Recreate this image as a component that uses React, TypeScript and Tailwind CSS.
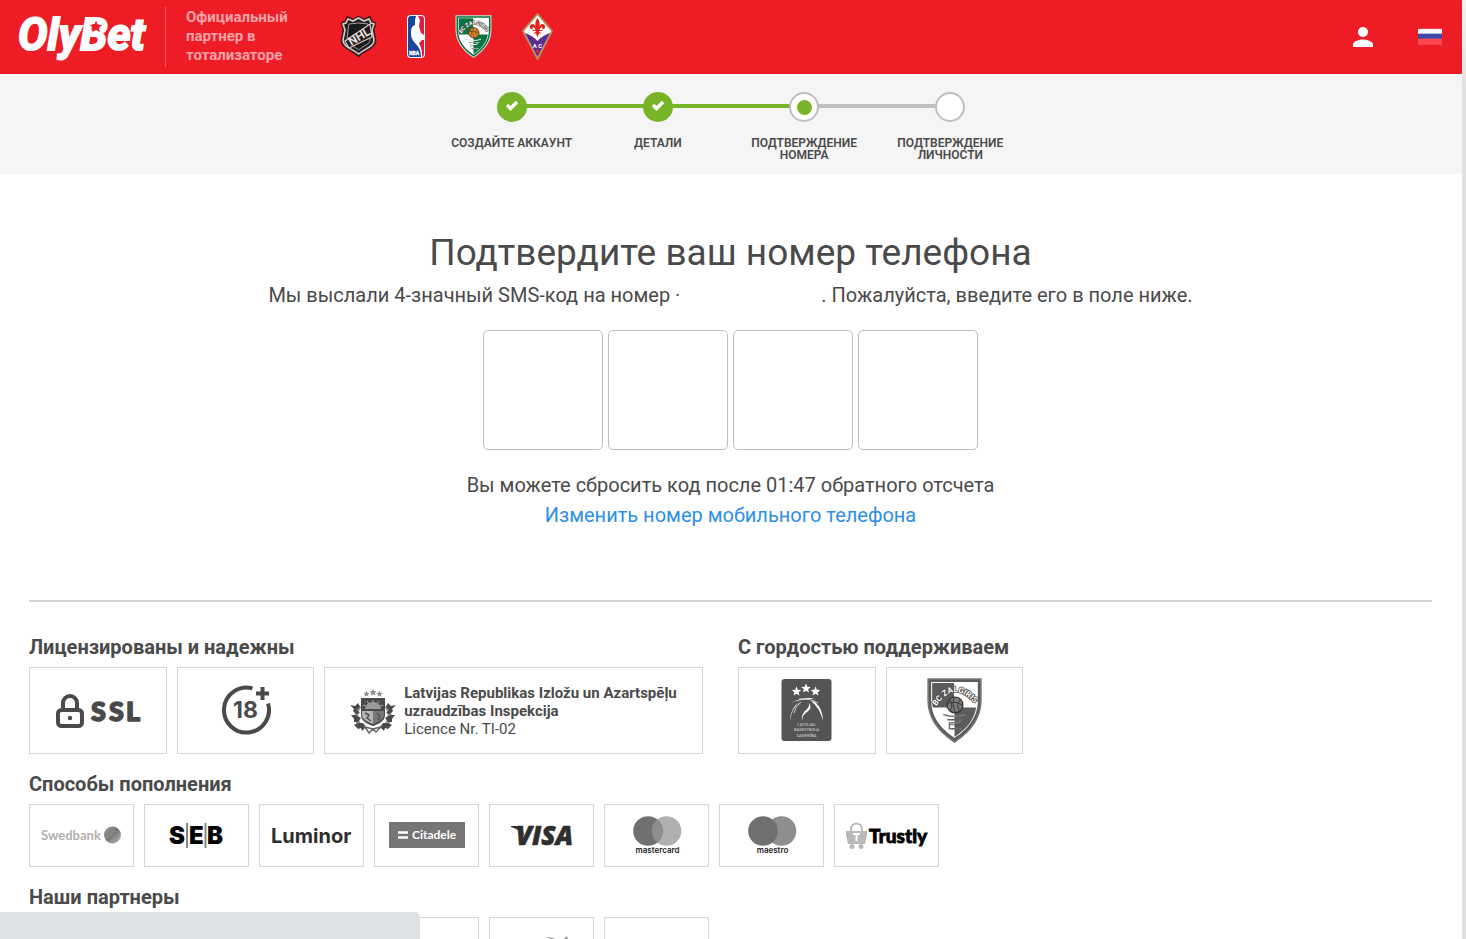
import React, { type ReactNode } from 'react';
import { MdPerson } from 'react-icons/md';
import clsx from 'clsx';

type StepState = 'done' | 'current' | 'todo';

const steps: { label: string; state: StepState }[] = [
  { label: 'Создайте аккаунт', state: 'done' },
  { label: 'Детали', state: 'done' },
  { label: 'Подтверждение номера', state: 'current' },
  { label: 'Подтверждение личности', state: 'todo' },
];

const STAR = 'M0-5 1.3-1.7 4.8-1.5 2.1.7 3 4.1 0 2.2-3 4.1-2.1.7-4.8-1.5-1.3-1.7Z';

function OlyBetLogo() {
  return (
    <svg width="134" height="60" viewBox="0 0 134 60" role="img" aria-label="OlyBet">
      <text
        x="0"
        y="43"
        fill="#fff"
        stroke="#fff"
        strokeWidth="2"
        fontSize="44"
        fontWeight="700"
        fontStyle="italic"
        fontFamily="Roboto, sans-serif"
      >
        OlyBet
      </text>
      <path d={STAR} transform="translate(78 20) scale(1.3)" fill="#ee1c25" />
    </svg>
  );
}

function NhlLogo() {
  return (
    <svg width="37" height="43" viewBox="0 0 37 43">
      <path
        d="M18.500 1 24 4l6-3 2 5 4 2-2 7 2 10c0 9-11 10-17.500 17C12 35 1 34 1 25l2-10-2-7 4-2 2-5 6 3Z"
        fill="#231f20"
        stroke="#5d1519"
        strokeWidth="1"
      />
      <path
        d="M18.500 3 24 6l5-2 2 4 3 1-2 6 2 10c0 7-10 9-15.500 14C13 34 3 32 3 25l2-10-2-6 3-1 2-4 5 2Z"
        fill="#231f20"
        stroke="#d9cfcc"
        strokeWidth="1.600"
      />
      <path
        d="M18.500 8 28 9l1 6 1 10c0 4-7 6-11.500 10C14 31 7 29 7 25l1-10 1-6Z"
        fill="#17191b"
        stroke="#b9aeac"
        strokeWidth=".9"
      />
      <path d="m5 26 25-17 2 13L9 33Z" fill="#231f20" stroke="#d9cfcc" strokeWidth="1.200" />
      <text
        x="19"
        y="25.500"
        transform="rotate(-31 19 21)"
        textAnchor="middle"
        fontSize="12"
        fontWeight="700"
        fill="#e6dfdd"
        fontFamily="Roboto, sans-serif"
      >
        NHL
      </text>
    </svg>
  );
}

function NbaLogo() {
  return (
    <svg width="18" height="43" viewBox="0 0 18 43">
      <rect width="18" height="43" rx="4" fill="#fff" />
      <path d="M9 1H4a3 3 0 0 0-3 3v35a3 3 0 0 0 3 3h10c0-8-3-11-7-15-2-3-3-5-3-8 0-6 1-8 4-9V5Z" fill="#17479e" />
      <path d="M11 1h3a3 3 0 0 1 3 3v16l-3-2-2-7 1-6Z" fill="#e31b3b" />
      <path d="M17 25v14c0 2-1 3-2 3 0-7-1-10-3-14l3-3Z" fill="#e31b3b" />
      <circle cx="15.500" cy="22.500" r="1.800" fill="#fff" />
      <text x="2" y="40" fontSize="5" fontWeight="700" fill="#fff" stroke="#fff" strokeWidth=".3" fontFamily="Roboto, sans-serif">
        NBA
      </text>
    </svg>
  );
}

interface ZalgirisProps {
  id: string;
  width: number;
  height: number;
  dark: string;
  ball: string;
  line: string;
}

function ZalgirisLogo({ id, width, height, dark, ball, line }: ZalgirisProps) {
  const shield = 'M1 1H53V22C53 42 41 54 27 63C13 54 1 42 1 22Z';
  return (
    <svg width={width} height={height} viewBox="0 0 54 64">
      <path d={shield} fill={dark} stroke={line} strokeWidth="1.500" />
      <path d="M4 4H50V22C50 40 39 51 27 59C15 51 4 40 4 22Z" fill="#fff" />
      <path d="M5 5H26.500V29H5.600C5 26 5 24 5 22Z" fill={dark} />
      <path d="M27 29H48.400C46 43 37 51 27 58Z" fill={dark} />
      <path id={id} d="M9 28Q27 0 49 28" fill="none" />
      <text
        fontSize="8"
        fontWeight="700"
        fill="#fff"
        stroke="#444"
        strokeWidth="1.400"
        paintOrder="stroke"
        fontFamily="Roboto, sans-serif"
      >
        <textPath href={`#${id}`}>BC ZALGIRIS</textPath>
      </text>
      <circle cx="27.500" cy="26.500" r="7.800" fill={ball} stroke="#333" strokeWidth="1.200" />
      <path
        d="M20 25q7-3 15 2M27 19q-3 7 1 15M22 21q4 5 1 11M33 21q-5 5-1 11"
        fill="none"
        stroke="#333"
        strokeWidth=".9"
      />
      <path d="M16 36q11 4 22 0M20 41h14l-3 3H22v6h12" fill="none" stroke={line} strokeWidth="1.500" />
      <path d="M20 41h14M22 46h10M24 50h9" fill="none" stroke="#555" strokeWidth=".8" />
    </svg>
  );
}

function FiorentinaLogo() {
  return (
    <svg width="31" height="47" viewBox="0 0 31 47">
      <path d="M15.500 1 30 18 15.500 46 1 18Z" fill="#fff" stroke="#b59258" strokeWidth="1.800" />
      <path d="M3 20c5 2 9 4 12.500 8 3.500-4 7.500-6 12.500-8L15.500 44Z" fill="#5b2d91" />
      <path
        d="M15.500 5c3 4 2.500 8 1 11.500 1-5 3.500-6.500 5.500-5 2.500 2 .5 5.500-2 4.500 1-1 .5-2-.8-1.500-1.200.6-1.700 2-2.200 4l2.500 2-2.500 0-1.500 4-1.500-4h-2.500l2.500-2c-.5-2-1-3.400-2.200-4-1.300-.5-1.800.5-.8 1.500-2.500 1-4.500-2.500-2-4.500 2-1.500 4.500 0 5.500 5C13 13 12.500 9 15.500 5Z"
        fill="#e2231a"
      />
      <path d="M10.500 17.500h10" stroke="#e2231a" strokeWidth="1" />
      <text x="15.500" y="35" textAnchor="middle" fontSize="6" fontWeight="700" fill="#fff" fontFamily="Roboto, sans-serif">
        A C
      </text>
      <path d="m15.500 36 1.700 2.500-1.700 2.500-1.700-2.500Z" fill="#e2231a" />
    </svg>
  );
}

function RussianFlag() {
  return (
    <svg width="24" height="18" viewBox="0 0 24 18">
      <rect width="24" height="17" fill="#f3414c" />
      <rect y="1" width="24" height="4" fill="#fff" />
      <rect y="5" width="24" height="1" fill="#b9bedd" />
      <rect y="6" width="24" height="4" fill="#3f4aa2" />
      <rect y="10" width="24" height="1" fill="#8a4f8f" />
      <rect y="11" width="24" height="5" fill="#ff4655" />
    </svg>
  );
}

function SslLogo() {
  return (
    <svg width="136" height="85" viewBox="0 0 136 85">
      <rect x="28" y="42" width="24" height="16" rx="3.500" fill="none" stroke="#4a4a4a" strokeWidth="4" />
      <path d="M33 42v-7a7 7 0 0 1 14 0v7" fill="none" stroke="#4a4a4a" strokeWidth="4" />
      <circle cx="40" cy="50" r="2.200" fill="#4a4a4a" />
      <g fontSize="27" fontWeight="900" fill="#4a4a4a" stroke="#4a4a4a" strokeWidth="1.500" strokeLinejoin="round" fontFamily="Lato, sans-serif">
        <text x="61" y="53">S</text>
        <text x="79" y="53">S</text>
        <text x="96" y="53">L</text>
      </g>
    </svg>
  );
}

function AgeLogo() {
  return (
    <svg width="135" height="85" viewBox="0 0 135 85">
      <path d="M90 35.500A22.500 22.500 0 1 1 74.500 20.400" fill="none" stroke="#4a4a4a" strokeWidth="4" />
      <path d="M84.500 19v13M78 25.500h13" stroke="#4a4a4a" strokeWidth="4" />
      <text x="67.500" y="50" textAnchor="middle" fontSize="23" fontWeight="700" fill="#4a4a4a" fontFamily="Inter, sans-serif">
        18
      </text>
    </svg>
  );
}

function LatviaEmblem() {
  return (
    <svg width="46" height="46" viewBox="0 0 46 46" className="shrink-0">
      <g fill="#8c8c8c">
        <path d={STAR} transform="translate(23 4.500) scale(.8)" />
        <path d={STAR} transform="translate(16.500 6) scale(.7)" />
        <path d={STAR} transform="translate(29.500 6) scale(.7)" />
      </g>
      <path d="M11 10h24v17c0 6-6 9-12 11-6-2-12-5-12-11Z" fill="#4a4a4a" />
      <path d="M15 21a8 7 0 0 1 16 0Z" fill="#9a9a9a" />
      <path d="M23 12v3M17 13l2 3M29 13l-2 3M13 17l3 1M33 17l-3 1" stroke="#aaa" strokeWidth="1" />
      <path d="M12 23h11v13c-6-2-11-5-11-9Z" fill="#b5b5b5" />
      <path d="M23 23h11v4c0 4-5 7-11 9Z" fill="#777" />
      <path d="m15 25 4 2-2 3 4 3M27 25l3 3-2 3 2 1" fill="none" stroke="#555" strokeWidth="1.500" />
      <path d="M10 18c-5 5-4 14-1 18M36 18c5 5 4 14 1 18" fill="none" stroke="#999" strokeWidth="4" />
      <g fill="#4a4a4a">
        <path d="M0 17l5 1 3-3 2 4-3 3 3 3-4 1-3-3 1-2Z" />
        <path d="M1 27l5 0 5 3-3 4-4 0 0-3Z" />
        <path d="M4 37l4-2 5 0 3 4-4 4-1-3-3 1Z" />
        <path d="M46 17l-5 1-3-3-2 4 3 3-3 3 4 1 3-3-1-2Z" />
        <path d="M45 27l-5 0-5 3 3 4 4 0 0-3Z" />
        <path d="M42 37l-4-2-5 0-3 4 4 4 1-3 3 1Z" />
      </g>
      <path d="m15 39 8 2 8-2-5 5-3-3-4 4Z" fill="none" stroke="#666" strokeWidth="1.500" />
    </svg>
  );
}

function BasketballUnionLogo() {
  return (
    <svg width="136" height="85" viewBox="0 0 136 85">
      <rect x="42.500" y="11" width="50" height="62" rx="3" fill="#545454" />
      <g fill="#fff">
        <path d={STAR} transform="translate(57.500 23.500)" />
        <path d={STAR} transform="translate(67 20.500)" />
        <path d={STAR} transform="translate(76.500 23.500)" />
        <path d="M51 35q16-7 24-4-14 0-24 4ZM62 33q-10 7-11 21 0-15 11-21ZM72 33q9 7 12 20 0-12-8-19Z" />
        <path d="M70 35q4 5-2 9-5 3-5 9-1-6 3-10 5-4 4-8Z" />
      </g>
      <path d="M60 31q11-1 19 4M62 34q-6 5-7 11" fill="none" stroke="#ccc" strokeWidth="1" />
      <g fill="#c4c4c4" fontSize="4" fontWeight="500" textAnchor="middle" fontFamily="Roboto, sans-serif">
        <text x="67.500" y="57.500">LATVIJAS</text>
        <text x="67.500" y="63">BASKETBOLA</text>
        <text x="67.500" y="68.500">SAVIENĪBA</text>
      </g>
    </svg>
  );
}

function SwedbankLogo() {
  return (
    <svg width="103" height="61" viewBox="0 0 103 61">
      <defs>
        <linearGradient id="coin" x1="0" y1="0" x2="1" y2="1">
          <stop offset="0" stopColor="#9a9a9a" />
          <stop offset=".5" stopColor="#777" />
          <stop offset="1" stopColor="#bdbdbd" />
        </linearGradient>
      </defs>
      <text x="11" y="35" fontSize="13" fontWeight="700" fill="#b2b2b2" fontFamily="Lato, sans-serif">
        Swedbank
      </text>
      <circle cx="82.500" cy="30" r="8.500" fill="url(#coin)" />
      <path d="M75 33q7-2 9-8M78 37q6-1 11-6" fill="none" stroke="#999" strokeWidth="1" />
    </svg>
  );
}

function SebLogo() {
  return (
    <svg width="103" height="61" viewBox="0 0 103 61">
      <g fontSize="24" fontWeight="900" fill="#000" fontFamily="Inter, sans-serif">
        <text x="24" y="39">S</text>
        <text x="44" y="39">E</text>
        <text x="62" y="39">B</text>
      </g>
      <path d="M42 18v25M60.500 18v25" stroke="#888" strokeWidth="2" />
    </svg>
  );
}

function LuminorLogo() {
  return (
    <svg width="103" height="61" viewBox="0 0 103 61">
      <text x="11" y="38" fontSize="20" fontWeight="700" fill="#2e2e2e" fontFamily="Inter, sans-serif">
        Luminor
      </text>
    </svg>
  );
}

function CitadeleLogo() {
  return (
    <svg width="103" height="61" viewBox="0 0 103 61">
      <rect x="14" y="17" width="76" height="26" fill="#767676" />
      <path d="M23 27.500h10M23 32.500h10" stroke="#fff" strokeWidth="2.500" />
      <text x="37" y="34" fontSize="12" fontWeight="700" fill="#fff" fontFamily="Lato, sans-serif">
        Citadele
      </text>
    </svg>
  );
}

function VisaLogo() {
  return (
    <svg width="103" height="61" viewBox="0 0 103 61">
      <path d="M21 21h10l4 11q-4-7-14-10Z" fill="#2e2e2e" />
      <text
        x="26"
        y="40"
        fontSize="26"
        fontWeight="800"
        fontStyle="italic"
        fill="#2e2e2e"
        stroke="#2e2e2e"
        strokeWidth=".6"
        fontFamily="'Open Sans', sans-serif"
      >
        VISA
      </text>
    </svg>
  );
}

function CirclesLogo({ name, light }: { name: string; light: string }) {
  return (
    <svg width="103" height="61" viewBox="0 0 103 61">
      <circle cx="61.500" cy="26" r="14.800" fill={light} />
      <circle cx="43" cy="26" r="14.800" fill="#707070" />
      {name === 'mastercard' && (
        <path d="M52.200 14.500a14.800 14.800 0 0 1 0 23 14.800 14.800 0 0 1 0-23Z" fill="#8e8e8e" />
      )}
      <text x="52.500" y="48" textAnchor="middle" fontSize="8" fontWeight="600" fill="#222" fontFamily="Inter, sans-serif">
        {name}
      </text>
    </svg>
  );
}

function TrustlyLogo() {
  return (
    <svg width="103" height="61" viewBox="0 0 103 61">
      <path d="M16 28v-4a5.500 5.500 0 0 1 11 0v4" fill="none" stroke="#bbb" strokeWidth="2" />
      <path d="M11 26h21v4l-2 9H13l-2-9Z" fill="#b9b9b9" />
      <circle cx="17" cy="41.500" r="2.500" fill="#b9b9b9" />
      <circle cx="26" cy="41.500" r="2.500" fill="#b9b9b9" />
      <path d="M18 29h7M21.500 29v7" stroke="#fff" strokeWidth="2" />
      <text x="34" y="38" fontSize="19" fontWeight="900" fill="#000" stroke="#000" strokeWidth=".8" fontFamily="Lato, sans-serif">
        Trustly
      </text>
    </svg>
  );
}

function BirdLogo() {
  return (
    <svg width="103" height="61" viewBox="0 0 103 61">
      <path d="M55 19q9 0 13 4-6-2-13-4ZM74 21l3-3 1 4-2 14-9 6q5-10 7-21Z" fill="#8c8c8c" />
    </svg>
  );
}

function Step({ label, state, index }: { label: string; state: StepState; index: number }) {
  const reached = state !== 'todo';
  return (
    <li className="relative flex flex-1 flex-col items-center">
      {index > 0 && (
        <span
          className={clsx('absolute top-3 right-1/2 h-1 w-full', reached ? 'bg-[#78b428]' : 'bg-[#bfbfbf]')}
        />
      )}
      <span
        className={clsx(
          'relative z-10 flex size-[30px] items-center justify-center rounded-full',
          state === 'done' ? 'bg-[#78b428]' : 'border-2 border-[#bfbfbf] bg-white',
        )}
      >
        {state === 'done' && (
          <svg width="14" height="14" viewBox="0 0 14 14" className="mb-1">
            <path d="m2 7 3.500 3.500L12 4" fill="none" stroke="#fff" strokeWidth="3.500" />
          </svg>
        )}
        {state === 'current' && <span className="size-[15px] rounded-full bg-[#78b428]" />}
      </span>
      <span className="mt-[15px] w-[134px] text-center text-[12px] leading-3 font-semibold uppercase">{label}</span>
    </li>
  );
}

function Tile({ children, small, wide }: { children?: ReactNode; small?: boolean; wide?: boolean }) {
  return (
    <li
      className={clsx(
        'flex shrink-0 items-center justify-center border border-[#d5d5d5] bg-white',
        small ? 'h-[63px] w-[105px]' : 'h-[87px]',
        !small && (wide ? 'w-[379px]' : 'w-[138px] even:w-[137px]'),
      )}
    >
      {children}
    </li>
  );
}

function TileGroup({ title, children }: { title: string; children: ReactNode }) {
  return (
    <section>
      <h2 className="text-[20px] leading-10 font-bold">{title}</h2>
      <ul className="flex gap-[10px]">{children}</ul>
    </section>
  );
}

export default function App() {
  return (
    <div className="flex h-screen overflow-hidden bg-white font-['Roboto',sans-serif] text-[#4a4a4a]">
      <div className="min-w-0 flex-1 overflow-hidden">
        <header className="flex h-[74px] items-center bg-[#ee1c25] pr-5 pl-[18px]">
          <a href="#" className="flex w-[147px] shrink-0">
            <OlyBetLogo />
          </a>
          <p className="flex h-[60px] w-[175px] shrink-0 items-center border-l border-white/30 pb-[2px] pl-5 text-[15px] leading-[19px] font-bold text-white/60">
            <span className="w-[110px]">Официальный партнер в тотализаторе</span>
          </p>
          <div className="flex items-center gap-[30px] pb-[2px]">
            <NhlLogo />
            <NbaLogo />
            <ZalgirisLogo id="arc-header" width={37} height={43} dark="#0b7440" ball="#f08a1d" line="#d8e6dc" />
            <FiorentinaLogo />
          </div>
          <nav className="ml-auto flex items-center gap-10">
            <button type="button" aria-label="Профиль" className="text-white">
              <MdPerson size={30} />
            </button>
            <button type="button" aria-label="Русский">
              <RussianFlag />
            </button>
          </nav>
        </header>

        <div className="flex h-[100px] justify-center bg-[#f5f5f5] pt-[18px]">
          <ol className="flex w-2/5">
            {steps.map((step, i) => (
              <Step key={step.label} label={step.label} state={step.state} index={i} />
            ))}
          </ol>
        </div>

        <main className="pr-[30px] pl-[29px]">
          <form className="flex flex-col items-center pt-[52px] text-center text-[20px] leading-[30px]">
            <h1 className="text-[37px] leading-[54px]">Подтвердите ваш номер телефона</h1>
            <p className="flex">
              <span>Мы выслали 4-значный SMS-код на номер ·</span>
              <span className="w-[141px]" />
              <span>. Пожалуйста, введите его в поле ниже.</span>
            </p>
            <div className="mt-5 flex gap-[5px]">
              {[1, 2, 3, 4].map((n) => (
                <input
                  key={n}
                  type="text"
                  inputMode="numeric"
                  maxLength={1}
                  aria-label={`Цифра ${n}`}
                  className="size-[120px] rounded-[5px] border border-[#bfbfbf] bg-white text-center text-6xl outline-none"
                />
              ))}
            </div>
            <p className="mt-5">Вы можете сбросить код после 01:47 обратного отсчета</p>
            <a href="#" className="text-[#2f8fe6]">
              Изменить номер мобильного телефона
            </a>
          </form>

          <hr className="mt-[70px] border-t-2 border-[#d5d5d5]" />

          <div className="mt-[25px] flex gap-[35px]">
            <TileGroup title="Лицензированы и надежны">
              <Tile>
                <SslLogo />
              </Tile>
              <Tile>
                <AgeLogo />
              </Tile>
              <Tile wide>
                <LatviaEmblem />
                <p className="ml-2 text-[15px] leading-[18px] whitespace-nowrap">
                  <strong className="font-bold">
                    Latvijas Republikas Izložu un Azartspēļu
                    <br />
                    uzraudzības Inspekcija
                  </strong>
                  <br />
                  Licence Nr. TI-02
                </p>
              </Tile>
            </TileGroup>
            <TileGroup title="С гордостью поддерживаем">
              <Tile>
                <BasketballUnionLogo />
              </Tile>
              <Tile>
                <ZalgirisLogo id="arc-footer" width={55} height={65} dark="#5c5c5c" ball="#7a7a7a" line="#777" />
              </Tile>
            </TileGroup>
          </div>

          <div className="mt-[10px]">
            <TileGroup title="Способы пополнения">
              <Tile small>
                <SwedbankLogo />
              </Tile>
              <Tile small>
                <SebLogo />
              </Tile>
              <Tile small>
                <LuminorLogo />
              </Tile>
              <Tile small>
                <CitadeleLogo />
              </Tile>
              <Tile small>
                <VisaLogo />
              </Tile>
              <Tile small>
                <CirclesLogo name="mastercard" light="#b0b0b0" />
              </Tile>
              <Tile small>
                <CirclesLogo name="maestro" light="#8e8e8e" />
              </Tile>
              <Tile small>
                <TrustlyLogo />
              </Tile>
            </TileGroup>
          </div>

          <div className="mt-[10px]">
            <TileGroup title="Наши партнеры">
              <Tile small />
              <Tile small />
              <Tile small />
              <Tile small />
              <Tile small>
                <BirdLogo />
              </Tile>
              <Tile small />
            </TileGroup>
          </div>
        </main>
      </div>

      <div className="w-1 shrink-0 bg-linear-to-b from-[#f1f1f1] to-[#e0e0e0] to-10%" />
      <div className="fixed bottom-0 left-0 h-[27px] w-[420px] rounded-tr-[5px] bg-[#dee1e6]" />
    </div>
  );
}
